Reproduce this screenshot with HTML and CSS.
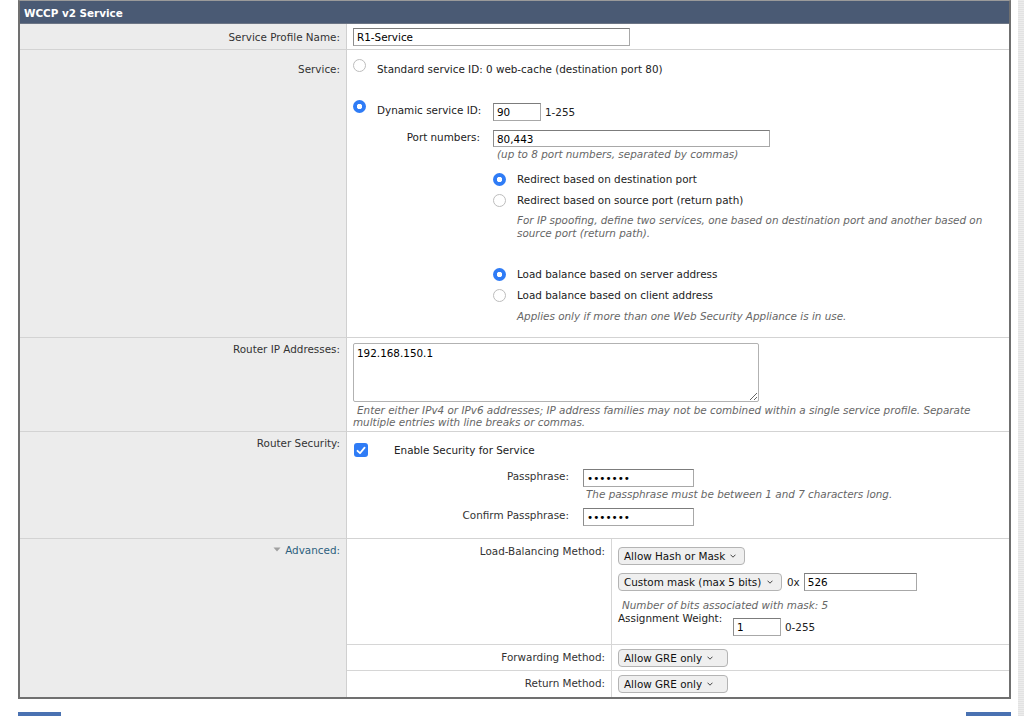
FILE: index.html
```html
<!DOCTYPE html>
<html lang="en">
<head>
<meta charset="utf-8">
<title>WCCP v2 Service</title>
<link rel="stylesheet" href="styles.css">
</head>
<body>
<div class="page">
  <div class="main">
    <div class="panel">
      <div class="panel-head">WCCP v2 Service</div>
      <div class="form">
        <div class="lbl lbl-name">Service Profile Name:</div>
        <div class="val val-name"><input class="txt w-name" type="text" value="R1-Service"></div>

        <div class="lbl lbl-service">Service:</div>
        <div class="val val-service">
          <div class="opt opt-std">
            <span class="radio"></span>
            <span class="opt-text">Standard service ID: 0 web-cache (destination port 80)</span>
          </div>
          <div class="opt opt-dyn">
            <span class="radio on"></span>
            <span class="opt-text dyn-text">Dynamic service ID:</span>
            <input class="txt w-id" type="text" value="90">
            <span class="range">1-255</span>
          </div>
          <div class="ports">
            <div class="port-line">
              <span class="port-lbl">Port numbers:</span>
              <input class="txt w-port" type="text" value="80,443">
            </div>
            <div class="hint port-hint">(up to 8 port numbers, separated by commas)</div>
            <div class="sub-opts">
              <div class="sub-row sub-first"><span class="radio on"></span><span>Redirect based on destination port</span></div>
              <div class="sub-row"><span class="radio"></span><span>Redirect based on source port (return path)</span></div>
              <div class="hint sub-hint spoof-hint">For IP spoofing, define two services, one based on destination port and another based on source port (return path).</div>
              <div class="sub-row lb-first"><span class="radio on"></span><span>Load balance based on server address</span></div>
              <div class="sub-row"><span class="radio"></span><span>Load balance based on client address</span></div>
              <div class="hint sub-hint lb-hint">Applies only if more than one Web Security Appliance is in use.</div>
            </div>
          </div>
        </div>

        <div class="lbl">Router IP Addresses:</div>
        <div class="val val-router">
          <textarea class="area">192.168.150.1</textarea>
          <div class="hint area-hint">Enter either IPv4 or IPv6 addresses; IP address families may not be combined within a single service profile. Separate multiple entries with line breaks or commas.</div>
        </div>

        <div class="lbl">Router Security:</div>
        <div class="val val-sec">
          <div class="check-row">
            <span class="check"><svg width="10" height="9" viewBox="0 0 10 9"><path d="M1.5 4.8 L4 7.2 L8.6 1.6" fill="none" stroke="#fff" stroke-width="1.8" stroke-linecap="round" stroke-linejoin="round"/></svg></span>
            <span class="check-text">Enable Security for Service</span>
          </div>
          <div class="pass-grid">
            <span class="pass-lbl">Passphrase:</span>
            <input class="txt w-pass" type="password" value="1234567">
            <span></span>
            <span class="hint pass-hint">The passphrase must be between 1 and 7 characters long.</span>
            <span class="pass-lbl confirm-lbl">Confirm Passphrase:</span>
            <input class="txt w-pass confirm-inp" type="password" value="1234567">
          </div>
        </div>

        <div class="lbl lbl-adv last"><span class="adv"><svg class="tri" width="8" height="5" viewBox="0 0 8 5"><path d="M0.5 0.5 L7.5 0.5 L4 4.5 Z" fill="#a0a0a0"/></svg>Advanced:</span></div>
        <div class="val val-adv last">
          <div class="adv-grid">
            <div class="alb alb-lb">Load-Balancing Method:</div>
            <div class="aval aval-lb">
              <div class="sel-line"><span class="sel sel-hash"><span class="sel-text">Allow Hash or Mask</span><svg class="chev" width="6" height="4" viewBox="0 0 6 4"><path d="M0.5 0.7 L3 3.2 L5.5 0.7" fill="none" stroke="#444" stroke-width="1"/></svg></span></div>
              <div class="sel-line mask-line"><span class="sel sel-mask"><span class="sel-text">Custom mask (max 5 bits)</span><svg class="chev" width="6" height="4" viewBox="0 0 6 4"><path d="M0.5 0.7 L3 3.2 L5.5 0.7" fill="none" stroke="#444" stroke-width="1"/></svg></span><span class="ox">0x</span><input class="txt w-mask" type="text" value="526"></div>
              <div class="hint bits-hint">Number of bits associated with mask: 5</div>
              <div class="weight-line"><span class="weight-lbl">Assignment Weight:</span><input class="txt w-weight" type="text" value="1"><span class="range weight-range">0-255</span></div>
            </div>
            <div class="alb">Forwarding Method:</div>
            <div class="aval"><span class="sel sel-gre"><span class="sel-text">Allow GRE only</span><svg class="chev" width="6" height="4" viewBox="0 0 6 4"><path d="M0.5 0.7 L3 3.2 L5.5 0.7" fill="none" stroke="#444" stroke-width="1"/></svg></span></div>
            <div class="alb alast">Return Method:</div>
            <div class="aval alast"><span class="sel sel-gre"><span class="sel-text">Allow GRE only</span><svg class="chev" width="6" height="4" viewBox="0 0 6 4"><path d="M0.5 0.7 L3 3.2 L5.5 0.7" fill="none" stroke="#444" stroke-width="1"/></svg></span></div>
          </div>
        </div>
      </div>
    </div>
    <div class="buttons">
      <button class="btn btn-cancel" type="button" aria-label="Cancel"></button>
      <button class="btn btn-submit" type="button" aria-label="Submit"></button>
    </div>
  </div>
  <div class="track"></div>
</div>
</body>
</html>
```
FILE: styles.css
```css
html, body {
  margin: 0;
  padding: 0;
  background: #fff;
}
body {
  font-family: "DejaVu Sans", Verdana, sans-serif;
  font-size: 10.4px;
  line-height: 13px;
  color: #222;
}
.page {
  display: flex;
  height: 716px;
  overflow: hidden;
}
.main {
  margin-left: 18px;
  width: 993px;
  flex: none;
}
.track {
  margin-left: 7px;
  width: 6px;
  flex: none;
  background: repeating-linear-gradient(0deg, #e2e2e2 0 1px, #ececec 1px 2px);
}
.panel {
  border: 2px solid #707070;
  border-top: 1px solid #9a9a9a;
}
.panel-head {
  height: 22px;
  line-height: 24px;
  padding-left: 4px;
  background: #4a5a74;
  color: #fff;
  font-weight: bold;
  border-bottom: 1px solid #6c7585;
}
.form {
  display: grid;
  grid-template-columns: 327px 1fr;
  grid-template-rows: 26px 288px 94px 107px 158px;
}
.lbl, .val {
  box-sizing: border-box;
  border-bottom: 1px solid #d3d3d3;
}
.lbl {
  background: #ececec;
  border-right: 1px solid #d0d0d0;
  text-align: right;
  padding: 5px 6px 0 0;
  color: #333;
}
.lbl.last, .val.last { border-bottom: none; }
.lbl-name { padding-top: 7px; }
.lbl-service { padding-top: 13px; }
.val {
  padding-left: 6px;
}
.txt {
  box-sizing: border-box;
  height: 18px;
  margin: 0;
  padding: 0 3px;
  font-family: "DejaVu Sans", Verdana, sans-serif;
  font-size: 10.4px;
  color: #000;
  background: #fff;
  border: 1px solid #a8a8a8;
  border-top-color: #7c7c7c;
  border-left-color: #8c8c8c;
  border-radius: 0;
  outline: none;
}
.val-name { padding-top: 4px; }
.w-name { width: 277px; }

/* service */
.opt {
  display: flex;
  align-items: flex-start;
}
.opt-std { margin-top: 9px; height: 41px; }
.opt-dyn { height: 30px; }
.radio {
  flex: none;
  box-sizing: border-box;
  width: 13px;
  height: 13px;
  border-radius: 50%;
  border: 1px solid #bdbdbd;
  background: #fff;
}
.radio.on {
  border: none;
  background: radial-gradient(circle, #fff 0 2.4px, #2f7cf6 3px);
}
.opt-text {
  margin-left: 11px;
  padding-top: 4px;
}
.dyn-text { width: 116px; }
.w-id { width: 48px; margin-top: 3px; }
.range {
  margin-left: 4px;
  margin-top: 3px;
  line-height: 18px;
}
.ports { margin-left: 24px; }
.port-line {
  display: flex;
  align-items: flex-start;
  height: 17px;
}
.port-lbl {
  width: 103px;
  text-align: right;
  margin-right: 13px;
  padding-top: 1px;
}
.w-port { width: 277px; height: 17px; }
.hint {
  font-style: italic;
  color: #666;
}
.port-hint {
  margin-left: 120px;
  line-height: 14px;
}
.sub-opts { margin-left: 116px; padding-right: 20px; }
.sub-row {
  display: flex;
  align-items: center;
  height: 21px;
  gap: 11px;
}
.sub-first { margin-top: 8px; }
.sub-hint { margin-left: 24px; }
.spoof-hint { margin-top: 3px; }
.lb-first { margin-top: 24px; }
.lb-hint { margin-top: 4px; }

/* router ip */
.val-router { padding-top: 5px; padding-right: 30px; }
.area {
  display: block;
  box-sizing: border-box;
  width: 406px;
  height: 59px;
  margin: 0;
  padding: 3px 3px;
  font-family: "DejaVu Sans", Verdana, sans-serif;
  font-size: 10.4px;
  line-height: 13px;
  color: #000;
  border: 1px solid #b2b2b2;
  border-radius: 2px;
  resize: both;
  overflow: hidden;
}
.area-hint {
  margin-top: 2px;
  line-height: 12px;
  text-indent: 4px;
}

/* security */
.val-sec { padding-top: 11px; padding-left: 7px; }
.check-row {
  display: flex;
  align-items: center;
  height: 14px;
}
.check {
  flex: none;
  width: 14px;
  height: 14px;
  border-radius: 3px;
  background: #2f7cf6;
  display: flex;
  align-items: center;
  justify-content: center;
}
.check-text { margin-left: 26px; }
.pass-grid {
  display: grid;
  grid-template-columns: 215px auto;
  column-gap: 14px;
  margin-top: 12px;
  align-items: start;
}
.pass-lbl {
  text-align: right;
  padding-top: 1px;
  color: #333;
}
.w-pass { width: 111px; }
.pass-hint { padding-left: 3px; line-height: 14px; margin-top: 0; }
.confirm-lbl, .confirm-inp { margin-top: 7px; }

/* advanced */
.adv { color: #2d5f7e; }
.tri { margin-right: 4px; vertical-align: 2px; }
.val-adv { padding-left: 0; }
.adv-grid {
  display: grid;
  grid-template-columns: 265px 1fr;
  grid-template-rows: 106px 26px 26px;
}
.alb, .aval {
  box-sizing: border-box;
  border-bottom: 1px solid #d6d6d6;
}
.alb {
  border-right: 1px solid #d6d6d6;
  text-align: right;
  padding: 6px 6px 0 0;
  color: #333;
}
.alb.alast, .aval.alast { border-bottom: none; }
.aval { padding: 4px 0 0 6px; }
.aval-lb { padding-top: 8px; }
.sel-line { display: flex; align-items: center; height: 18px; }
.mask-line { margin-top: 8px; }
.sel {
  box-sizing: border-box;
  display: inline-flex;
  align-items: center;
  height: 18px;
  padding: 0 8px 0 5px;
  background: #efefef;
  border: 1px solid #b4b4b4;
  border-radius: 4px;
  color: #111;
}
.sel-text { margin-right: 5px; white-space: nowrap; }
.chev { flex: none; margin-left: auto; }
.sel-hash { width: 127px; }
.sel-mask { width: 164px; }
.sel-gre { width: 110px; padding-right: 15px; }
.ox { margin-left: 5px; margin-right: 4px; }
.w-mask { width: 113px; }
.bits-hint { margin: 8px 0 0 4px; }
.weight-line { display: flex; align-items: flex-start; }
.weight-lbl { width: 115px; }
.w-weight { width: 48px; margin-top: 6px; }
.weight-range { margin-top: 6px; margin-left: 4px; }

/* buttons */
.buttons {
  display: flex;
  justify-content: space-between;
  margin-top: 13px;
}
.btn {
  height: 24px;
  border: none;
  border-radius: 0;
  background: #4a72b2;
  padding: 0;
}
.btn-cancel { width: 43px; }
.btn-submit { width: 45px; }
```
